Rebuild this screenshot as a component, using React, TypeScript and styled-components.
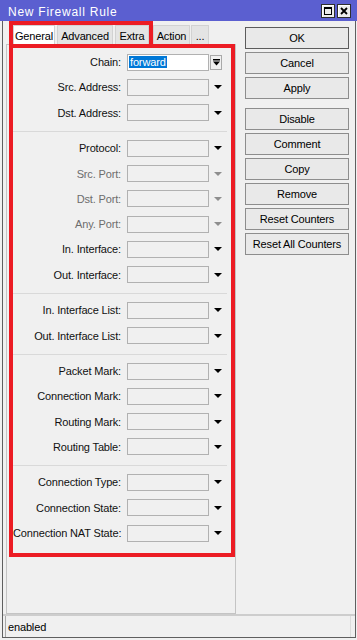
import React from 'react';
import styled, { createGlobalStyle } from 'styled-components';

const RED = '#ec1c24';

const GlobalStyle = createGlobalStyle`
  html, body {
    margin: 0;
    padding: 0;
    background: #f0f0f0;
  }
  body {
    font-family: "Liberation Sans", Arial, sans-serif;
    font-size: 11px;
    color: #000;
  }
  * {
    box-sizing: border-box;
  }
`;

const Window = styled.div`
  width: 357px;
  height: 640px;
  display: flex;
  flex-direction: column;
  background: #f0f0f0;
  overflow: hidden;
  letter-spacing: -0.15px;
`;

const TitleBar = styled.div`
  height: 21px;
  flex: none;
  background: #5b5fd0;
  display: flex;
  align-items: center;
  justify-content: space-between;
  padding: 0 6px 0 8px;
`;

const Title = styled.span`
  color: #fff;
  font-size: 12px;
  letter-spacing: 0.75px;
  padding-top: 3px;
`;

const TitleButtons = styled.div`
  display: flex;
  gap: 2px;
  padding-top: 1px;
`;

const TitleButton = styled.div`
  width: 14px;
  height: 14px;
  background: #ececec;
  border: 1px solid #2e2e2e;
  box-shadow: inset 1px 1px 0 #fff;
  display: flex;
  align-items: center;
  justify-content: center;
`;

const Frame = styled.div`
  flex: 1;
  min-height: 0;
  display: flex;
  flex-direction: column;
  margin: 0 1px 2px 2px;
  border: 1px solid #5f5f5f;
  border-top: none;
`;

const Body = styled.div`
  flex: 1;
  min-height: 0;
  display: flex;
`;

const MainColumn = styled.div`
  width: 230px;
  margin-left: 3px;
  display: flex;
  flex-direction: column;
`;

const TabRow = styled.div`
  height: 23px;
  flex: none;
  display: flex;
  align-items: flex-start;
`;

const TabGroup = styled.div`
  height: 24px;
  margin-left: 3px;
  border: 4px solid ${RED};
  border-bottom: none;
  display: flex;
  gap: 2px;
  overflow: hidden;
`;

const Tab = styled.div<{ $active?: boolean; $w: number }>`
  width: ${p => p.$w}px;
  height: 19px;
  flex: none;
  background: ${p => (p.$active ? '#fff' : '#e4e4e4')};
  border: 1px solid #d2d2d2;
  border-bottom: none;
  display: flex;
  align-items: center;
  justify-content: center;
  padding-top: 1px;
  white-space: nowrap;
`;

const OuterTab = styled(Tab)<{ $gap?: number }>`
  margin-top: 4px;
  margin-left: ${p => p.$gap ?? 0}px;
`;

const Panel = styled.div`
  flex: 1;
  border: 1px solid #c4c4c4;
  padding-left: 2px;
`;

const FormBox = styled.div`
  width: 226px;
  height: 513px;
  margin-top: -1px;
  border: 4px solid ${RED};
  padding-top: 5.7px;
`;

const Section = styled.div<{ $first?: boolean }>`
  display: flex;
  flex-direction: column;
  gap: 8.3px;
  margin-right: 4px;
  padding: ${p => (p.$first ? '0' : '8px')} 0 9.5px;
  border-top: ${p => (p.$first ? 'none' : '1px solid #d9d9d9')};
`;

const Row = styled.div`
  height: 17px;
  display: flex;
  align-items: center;
`;

const Label = styled.span<{ $disabled?: boolean }>`
  width: 108px;
  flex: none;
  text-align: right;
  white-space: nowrap;
  color: ${p => (p.$disabled ? '#6d6d6d' : '#111')};
`;

const Field = styled.div<{ $white?: boolean }>`
  width: 82px;
  height: 17px;
  flex: none;
  margin-left: 6px;
  border: 1px solid #b1b1b1;
  background: ${p => (p.$white ? '#fff' : '#f0f0f0')};
  display: flex;
  align-items: center;
  padding-left: 1px;
`;

const Selected = styled.span`
  background: #0078d7;
  color: #fff;
  line-height: 12px;
  padding: 0 1px;
`;

const DropArrow = styled.span<{ $disabled?: boolean }>`
  margin-left: 5px;
  width: 0;
  height: 0;
  border-left: 4px solid transparent;
  border-right: 4px solid transparent;
  border-top: 4px solid ${p => (p.$disabled ? '#8e8e8e' : '#000')};
`;

const ChainButton = styled.div`
  width: 12px;
  height: 15px;
  margin-left: 1px;
  border: 1px solid #a9a9a9;
  background: #f0f0f0;
  display: flex;
  align-items: center;
  justify-content: center;
`;

const SideColumn = styled.div`
  width: 104px;
  margin-left: 9px;
  padding-top: 6px;
  display: flex;
  flex-direction: column;
  gap: 3px;
`;

const SideButton = styled.div<{ $default?: boolean; $spaced?: boolean }>`
  height: 22px;
  flex: none;
  margin-top: ${p => (p.$spaced ? 6 : 0)}px;
  border: 1px solid ${p => (p.$default ? '#5c5c5c' : '#8d8d8d')};
  background: #e9e9e9;
  display: flex;
  align-items: center;
  justify-content: center;
  white-space: nowrap;
`;

const StatusBar = styled.div`
  height: 23px;
  flex: none;
  border-top: 2px solid #cdcdcd;
  padding: 0 4px 0 2px;
  display: flex;
`;

const StatusField = styled.div`
  flex: 1;
  border-left: 1px solid #a9a9a9;
  border-right: 1px solid #dcdcdc;
  padding-left: 2px;
  display: flex;
  align-items: center;
`;

type Field = { label: string; disabled?: boolean };

const sections: Field[][] = [
  [{ label: 'Src. Address:' }, { label: 'Dst. Address:' }],
  [
    { label: 'Protocol:' },
    { label: 'Src. Port:', disabled: true },
    { label: 'Dst. Port:', disabled: true },
    { label: 'Any. Port:', disabled: true },
    { label: 'In. Interface:' },
    { label: 'Out. Interface:' },
  ],
  [{ label: 'In. Interface List:' }, { label: 'Out. Interface List:' }],
  [
    { label: 'Packet Mark:' },
    { label: 'Connection Mark:' },
    { label: 'Routing Mark:' },
    { label: 'Routing Table:' },
  ],
  [
    { label: 'Connection Type:' },
    { label: 'Connection State:' },
    { label: 'Connection NAT State:' },
  ],
];

const buttons = ['OK', 'Cancel', 'Apply', 'Disable', 'Comment', 'Copy', 'Remove', 'Reset Counters', 'Reset All Counters'];

function FieldRow({ label, disabled }: Field) {
  return (
    <Row>
      <Label $disabled={disabled}>{label}</Label>
      <Field />
      <DropArrow $disabled={disabled} />
    </Row>
  );
}

export default function App() {
  return (
    <>
      <GlobalStyle />
      <Window>
        <TitleBar>
          <Title>New Firewall Rule</Title>
          <TitleButtons>
            <TitleButton>
              <svg width="8" height="8" viewBox="0 0 8 8">
                <rect x="0.5" y="0.5" width="7" height="7" fill="none" stroke="#000" />
                <rect x="0" y="0" width="8" height="2" fill="#000" />
              </svg>
            </TitleButton>
            <TitleButton>
              <svg width="8" height="8" viewBox="0 0 8 8">
                <path d="M1 1L7 7M7 1L1 7" stroke="#000" strokeWidth="1.8" />
              </svg>
            </TitleButton>
          </TitleButtons>
        </TitleBar>
        <Frame>
          <Body>
            <MainColumn>
              <TabRow>
                <TabGroup>
                  <Tab $active $w={42}>General</Tab>
                  <Tab $w={56}>Advanced</Tab>
                  <Tab $w={34}>Extra</Tab>
                </TabGroup>
                <OuterTab $w={37}>Action</OuterTab>
                <OuterTab $w={18} $gap={1}>...</OuterTab>
              </TabRow>
              <Panel>
                <FormBox>
                  <Section $first>
                    <Row>
                      <Label>Chain:</Label>
                      <Field $white>
                        <Selected>forward</Selected>
                      </Field>
                      <ChainButton>
                        <svg width="7" height="7" viewBox="0 0 7 7">
                          <rect x="0" y="0" width="7" height="1.5" fill="#000" />
                          <path d="M0 2.5H7L3.5 6.5Z" fill="#000" />
                        </svg>
                      </ChainButton>
                    </Row>
                    {sections[0].map(f => (
                      <FieldRow key={f.label} {...f} />
                    ))}
                  </Section>
                  {sections.slice(1).map((sec, i) => (
                    <Section key={i}>
                      {sec.map(f => (
                        <FieldRow key={f.label} {...f} />
                      ))}
                    </Section>
                  ))}
                </FormBox>
              </Panel>
            </MainColumn>
            <SideColumn>
              {buttons.map(b => (
                <SideButton key={b} $default={b === 'OK'} $spaced={b === 'Disable'}>
                  {b}
                </SideButton>
              ))}
            </SideColumn>
          </Body>
          <StatusBar>
            <StatusField>enabled</StatusField>
          </StatusBar>
        </Frame>
      </Window>
    </>
  );
}
